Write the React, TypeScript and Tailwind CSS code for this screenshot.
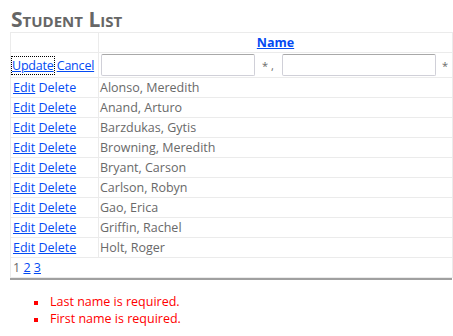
export default function App() {
  const students = [
    "Alonso, Meredith",
    "Anand, Arturo",
    "Barzdukas, Gytis",
    "Browning, Meredith",
    "Bryant, Carson",
    "Carlson, Robyn",
    "Gao, Erica",
    "Griffin, Rachel",
    "Holt, Roger",
  ]

  return (
    <div className="w-[453px] h-[336px] bg-white text-[#696969] text-[12.5px] leading-[19px] font-['Open_Sans',sans-serif]">
      <h2 className="pl-[11px] pt-[7px] h-[32px] text-[21px] leading-[24px] font-bold [font-variant:small-caps] text-[#666]">
        Student List
      </h2>
      <table className="ml-[10px] w-[443px] table-fixed border-collapse border border-[#ebebeb]">
        <thead>
          <tr className="h-[19px]">
            <th className="w-[88px] border border-[#ebebeb]"></th>
            <th className="border border-[#ebebeb] text-center">
              <a href="#" className="text-[#034af3] underline font-bold">Name</a>
            </th>
          </tr>
        </thead>
        <tbody>
          <tr className="h-[25px]">
            <td className="border border-[#ebebeb] px-[1px] whitespace-nowrap tracking-[-0.2px]">
              <a href="#" className="text-[#034af3] underline outline-1 outline-dotted outline-black">Update</a>{" "}
              <a href="#" className="text-[#034af3] underline">Cancel</a>
            </td>
            <td className="border border-[#ebebeb] px-[2px]">
              <div className="flex items-center text-[#696969]">
                <input className="w-[154px] h-[22px] border border-[#d0d0d8] border-t-[#a8a8a8] rounded-[2px]" />
                <span className="ml-[7px] text-[11px] text-[#696969]">*</span>
                <span className="ml-[3px] mr-[8px] text-[11px] text-[#696969]">,</span>
                <input className="w-[154px] h-[22px] border border-[#d0d0d8] border-t-[#a8a8a8] rounded-[2px]" />
                <span className="ml-[6px] text-[11px] text-[#696969]">*</span>
              </div>
            </td>
          </tr>
          {students.map((s, i) => (
            <tr key={s} className="h-[19px]">
              <td className="border border-[#ebebeb] px-[2px] whitespace-nowrap">
                <a href="#" className="text-[#034af3] underline">Edit</a>{" "}
                <a href="#" className={i === 0 ? "text-[#034af3]" : "text-[#034af3] underline"}>Delete</a>
              </td>
              <td className="border border-[#ebebeb] px-[1px]">{s}</td>
            </tr>
          ))}
          <tr className="h-[19px]">
            <td colSpan={2} className="border border-[#ebebeb] px-[2px]">
              <span>1</span> <a href="#" className="text-[#034af3] underline">2</a>{" "}
              <a href="#" className="text-[#034af3] underline">3</a>
            </td>
          </tr>
        </tbody>
      </table>
      <div className="ml-[10px] mr-[1px] h-[2px] bg-[#a0a0a0]"></div>
      <ul className="mt-[13px] pl-[48px] list-[square] text-[#ff0000] leading-[17px] marker:text-[10px]">
        <li className="pl-[2px]">Last name is required.</li>
        <li className="pl-[2px]">First name is required.</li>
      </ul>
    </div>
  )
}
